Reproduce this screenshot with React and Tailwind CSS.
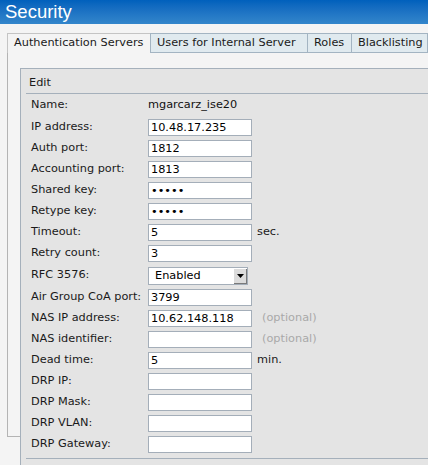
const font = { fontFamily: '"DejaVu Sans", Verdana, sans-serif' };

const rows = [
  { label: 'Name:', text: 'mgarcarz_ise20', h: 'h-[23px]' },
  { label: 'IP address:', value: '10.48.17.235' },
  { label: 'Auth port:', value: '1812' },
  { label: 'Accounting port:', value: '1813' },
  { label: 'Shared key:', value: '12345', password: true },
  { label: 'Retype key:', value: '12345', password: true },
  { label: 'Timeout:', value: '5', suffix: 'sec.' },
  { label: 'Retry count:', value: '3' },
  { label: 'RFC 3576:', select: 'Enabled', h: 'h-[23px]' },
  { label: 'Air Group CoA port:', value: '3799' },
  { label: 'NAS IP address:', value: '10.62.148.118', optional: true },
  { label: 'NAS identifier:', value: '', optional: true },
  { label: 'Dead time:', value: '5', suffix: 'min.' },
  { label: 'DRP IP:', value: '' },
  { label: 'DRP Mask:', value: '' },
  { label: 'DRP VLAN:', value: '' },
  { label: 'DRP Gateway:', value: '' },
];

const tabs = [
  { name: 'Authentication Servers', w: 'w-[143px]', active: true },
  { name: 'Users for Internal Server', w: 'w-[157px]' },
  { name: 'Roles', w: 'w-[44px]' },
  { name: 'Blacklisting', w: 'w-[77px]', last: true },
];

function Field({ row }) {
  if (row.text) return <span className="text-[#111]">{row.text}</span>;
  if (row.select) {
    return (
      <div className="flex h-[18px] w-[100px] items-stretch border border-[#a4aeb9] bg-white">
        <span className="flex-1 pl-[6px] leading-[16px] text-black">{row.select}</span>
        <span className="flex w-[14px] items-center justify-center border-l border-t border-white bg-[#dcdcdc] shadow-[inset_-1px_-1px_0_#7a7a7a]">
          <svg width="7" height="4" viewBox="0 0 7 4"><path d="M0 0h7L3.5 4z" fill="#000" /></svg>
        </span>
      </div>
    );
  }
  return (
    <input
      readOnly
      type={row.password ? 'password' : 'text'}
      value={row.value}
      className="h-[17px] w-[104px] border border-[#a4aeb9] bg-white px-[2px] text-[11.3px] leading-[15px] text-black outline-none"
      style={font}
    />
  );
}

export default function App() {
  return (
    <div className="h-[465px] w-[428px] overflow-hidden bg-[#f4f4f4] text-[11.3px] text-[#1a1a1a]" style={font}>
      <div className="h-[24px] bg-gradient-to-b from-[#0060bc] to-[#3386cb] pl-[5px] text-[18.5px] leading-[23px] text-white" style={{ fontFamily: '"Liberation Sans", Arial, sans-serif' }}>
        Security
      </div>

      <div className="ml-[7px] mt-[9px] flex h-[20px] items-stretch">
        {tabs.map((t) => (
          <div
            key={t.name}
            className={`${t.w} flex shrink-0 items-center whitespace-nowrap border-l border-t pl-[6px] ${
              t.active ? 'border-[#c4c4c4] bg-[#f4f4f4]' : 'border-b border-[#a3b4c2] bg-[#e0eaef]'
            } ${t.last ? 'border-r' : ''}`}
          >
            {t.name}
          </div>
        ))}
      </div>

      <div className="ml-[7px] h-[384px] border-b border-l border-[#b4b4b4] pl-[12px] pt-[15px]">
        <div className="border-l border-t border-[#a5b0bb] bg-[#e4e4e4]">
          <div className="flex h-[24px] items-end pb-[3px] pl-[8px] leading-[14px]">Edit</div>
          <div className="ml-[5px] border-b border-t border-[#a5b0bb] pb-[3px] pl-[5px]">
            {rows.map((r) => (
              <div key={r.label} className={`flex items-center ${r.h || 'h-[21px]'}`}>
                <span className="w-[117px] shrink-0 whitespace-nowrap">{r.label}</span>
                <Field row={r} />
                {r.suffix && <span className="ml-[5px]">{r.suffix}</span>}
                {r.optional && <span className="ml-[10px] text-[#a9a9a9]">(optional)</span>}
              </div>
            ))}
          </div>
          <div className="h-[20px]" />
        </div>
      </div>
    </div>
  );
}
